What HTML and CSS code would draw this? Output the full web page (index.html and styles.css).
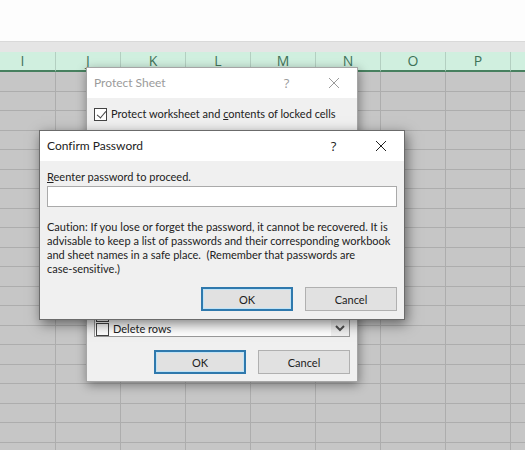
FILE: index.html
```
<!DOCTYPE html>
<html lang="en">
<head>
    <meta charset="UTF-8">
    <meta name="viewport" content="width=device-width, initial-scale=1.0">
    <title>Confirm Password</title>
    <link rel="stylesheet" href="styles.css">
</head>
<body>
    <div class="ribbon"></div>
    <div class="formula-gap"></div>
    <div class="sheet">
        <table>
            <thead>
                <tr><th>I</th><th>J</th><th>K</th><th>L</th><th>M</th><th>N</th><th>O</th><th>P</th><th></th></tr>
            </thead>
            <tbody id="rows"></tbody>
        </table>
    </div>

    <!-- Protect Sheet -->
    <div class="dialog protect">
        <div class="title-bar">
            <span class="title">Protect Sheet</span>
            <button class="title-button" aria-label="Help">?</button>
            <button class="title-button" aria-label="Close">
                <svg width="12" height="12" viewBox="0 0 12 12"><path d="M1 1L11 11M11 1L1 11"/></svg>
            </button>
        </div>
        <div class="dialog-body">
            <label class="check"><input type="checkbox" checked><span>Protect worksheet and <u>c</u>ontents of locked cells</span></label>
            <div class="list">
                <div class="list-items">
                    <label class="check"><input type="checkbox"><span>Delete columns</span></label>
                    <label class="check"><input type="checkbox"><span>Delete rows</span></label>
                </div>
                <div class="scrollbar">
                    <button class="scroll-down" aria-label="Scroll down">
                        <svg width="10" height="8" viewBox="0 0 10 8"><path d="M1 2L5 6L9 2"/></svg>
                    </button>
                </div>
            </div>
            <div class="buttons">
                <button class="button default">OK</button>
                <button class="button">Cancel</button>
            </div>
        </div>
    </div>

    <!-- Confirm Password -->
    <div class="dialog confirm">
        <div class="title-bar">
            <span class="title">Confirm Password</span>
            <button class="title-button" aria-label="Help">?</button>
            <button class="title-button" aria-label="Close">
                <svg width="12" height="12" viewBox="0 0 12 12"><path d="M1 1L11 11M11 1L1 11"/></svg>
            </button>
        </div>
        <div class="dialog-body">
            <label class="field-label" for="password"><u>R</u>eenter password to proceed.</label>
            <input class="field" type="password" id="password">
            <p class="caution">Caution: If you lose or forget the password, it cannot be recovered. It is<br>
            advisable to keep a list of passwords and their corresponding workbook<br>
            and sheet names in a safe place. &nbsp;(Remember that passwords are<br>
            case-sensitive.)</p>
            <div class="buttons">
                <button class="button default">OK</button>
                <button class="button">Cancel</button>
            </div>
        </div>
    </div>

    <script>
        const rows = document.getElementById('rows');
        for (let i = 0; i < 20; i++) {
            const row = rows.insertRow();
            for (let j = 0; j < 9; j++) {
                row.insertCell();
            }
        }
    </script>
</body>
</html>
```
FILE: styles.css
```
:root {
    --cell-color: #c6c6c6;
    --line-color: #adadad;
    --header-color: #d0efdf;
    --header-text: #3f7258;
    --dialog-color: #f0f0f0;
    --accent-color: #2f79ad;
}

* {
    box-sizing: border-box;
}

body {
    margin: 0;
    height: 100vh;
    overflow: hidden;
    position: relative;
    display: flex;
    flex-direction: column;
    font-family: Lato, 'Open Sans', sans-serif;
    font-size: 11px;
    line-height: 14px;
    font-variant-ligatures: none;
    color: #222222;
    background-color: #fdfdfd;
}

.ribbon {
    flex: none;
    height: 41px;
}

.formula-gap {
    flex: none;
    height: 11px;
    background-color: #e5e5e5;
    border-top: 1px solid #d9d9d9;
}

.sheet {
    flex: 1;
    min-height: 0;
    overflow: hidden;
    background-color: var(--cell-color);
}

table {
    width: 100%;
    table-layout: fixed;
    border-collapse: separate;
    border-spacing: 0;
}

th {
    width: 65px;
    height: 20px;
    padding: 0;
    background-color: var(--header-color);
    border-right: 1px solid #b3cfc1;
    border-bottom: 2px solid #47805f;
    color: var(--header-text);
    font-family: 'Open Sans', sans-serif;
    font-size: 14px;
    font-weight: normal;
    line-height: 18px;
}

th:first-child {
    width: 56px;
    padding-right: 10px;
}

th:last-child {
    width: auto;
}

td {
    height: 20px;
    padding: 0;
    border-right: 1px solid var(--line-color);
    border-bottom: 1px solid var(--line-color);
}

th:last-child,
td:last-child {
    border-right: none;
}

tr:nth-child(even) td {
    height: 19px;
}

.dialog {
    position: absolute;
    display: flex;
    flex-direction: column;
    background-color: var(--dialog-color);
    white-space: nowrap;
}

.protect {
    left: 86px;
    top: 67px;
    width: 272px;
    border: 1px solid #a5a5a5;
    box-shadow: 1px 3px 10px rgba(0, 0, 0, 0.4);
}

.confirm {
    left: 39px;
    top: 130px;
    width: 366px;
    border: 1px solid #6b6b6b;
    box-shadow: 2px 4px 12px rgba(0, 0, 0, 0.5);
}

.title-bar {
    display: flex;
    align-items: center;
    height: 30px;
    padding-left: 7px;
    background-color: white;
    font-size: 12px;
}

.title {
    flex: 1;
}

.title-button {
    width: 47px;
    height: 30px;
    padding: 0;
    background: none;
    border: none;
    color: inherit;
    font-family: 'Open Sans', sans-serif;
    font-size: 13px;
}

.title-button svg {
    display: block;
    margin: auto;
}

svg {
    fill: none;
    stroke: currentColor;
    stroke-width: 1;
}

.protect .title-bar {
    color: #9b9b9b;
}

.dialog-body {
    display: flex;
    flex-direction: column;
    padding: 9px 7px 7px;
}

.check {
    display: flex;
    align-items: center;
    gap: 4px;
}

.check input {
    appearance: none;
    flex: none;
    position: relative;
    width: 13px;
    height: 13px;
    margin: 0;
    background-color: white;
    border: 1px solid #444444;
}

.check input:checked::after {
    content: '';
    position: absolute;
    left: 4px;
    top: 0;
    width: 4px;
    height: 8px;
    border: solid #444444;
    border-width: 0 1px 1px 0;
    transform: rotate(40deg);
}

.list {
    display: flex;
    height: 198px;
    margin-top: 18px;
    background-color: white;
    border: 1px solid #999999;
}

.list-items {
    flex: 1;
    display: flex;
    flex-direction: column;
    justify-content: flex-end;
    padding-left: 1px;
}

.scrollbar {
    display: flex;
    align-items: flex-end;
    width: 18px;
    background-color: var(--dialog-color);
}

.scroll-down {
    width: 18px;
    height: 18px;
    padding: 0;
    background: none;
    border: none;
}

.scroll-down path {
    stroke: #505050;
    stroke-width: 2;
}

.buttons {
    display: flex;
    justify-content: flex-end;
    gap: 12px;
    margin-top: 13px;
}

.confirm .buttons {
    margin: 11px 0 1px;
}

.button {
    width: 92px;
    height: 24px;
    padding: 0;
    background-color: #e1e1e1;
    border: 1px solid #b0b0b0;
    color: inherit;
    font-family: inherit;
    font-size: 11px;
}

.button.default {
    border: 2px solid var(--accent-color);
    box-shadow: inset 0 0 0 1px #bfe3f7;
}

.field-label {
    margin-bottom: 2px;
}

.field {
    width: 100%;
    height: 21px;
    padding: 0 4px;
    background-color: white;
    border: 1px solid #aaaaaa;
}

.caution {
    margin: 13px 0 0;
}
```
